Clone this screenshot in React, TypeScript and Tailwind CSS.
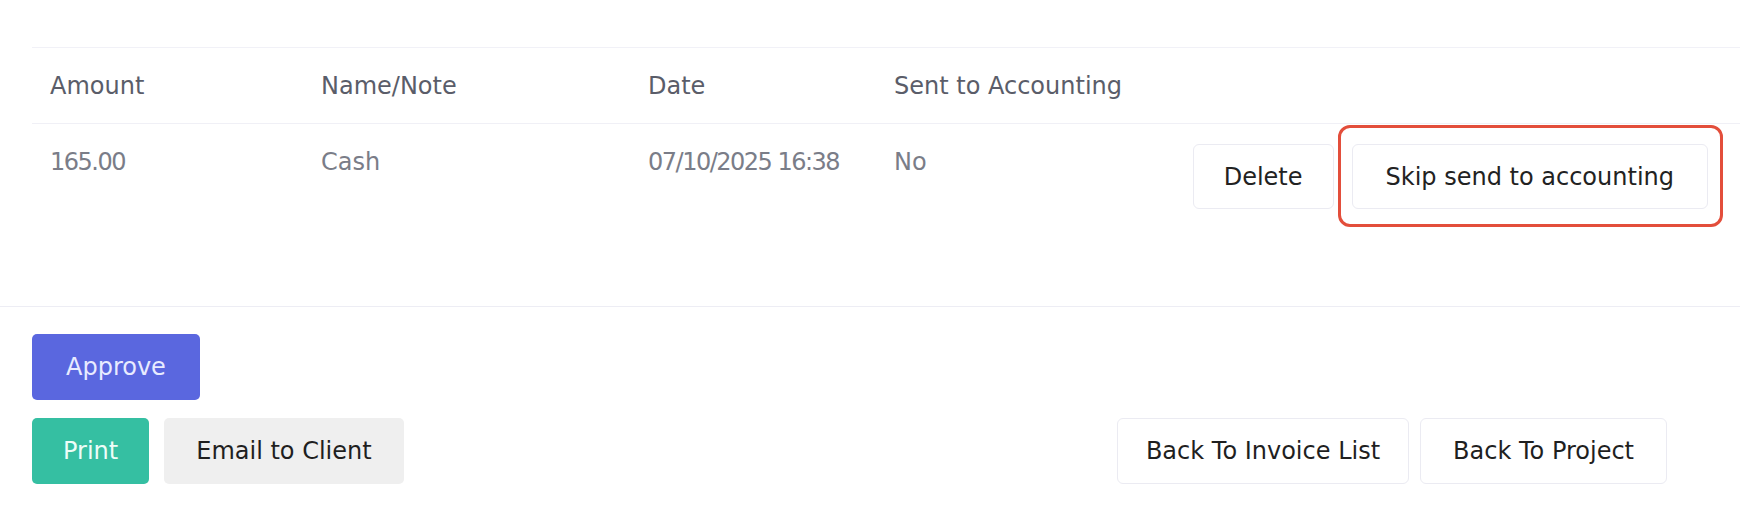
const rows = [
  { amount: "165.00", note: "Cash", date: "07/10/2025 16:38", sent: "No" },
];

const grid = "grid grid-cols-[271px_327px_246px_1fr_auto]";

export default function App() {
  return (
    <div className="h-[516px] w-full bg-white font-['DejaVu_Sans',sans-serif] text-[24px] leading-[36px]">
      <section className="border-b border-[#ededf4] pl-8 pt-[47px]">
        <div className="border-t border-[#f1f1f7]">
          <div className={`${grid} border-b border-[#f0f0f6] pb-[19px] pt-5 text-[#5a5d69]`}>
            <div className="pl-[18px]">Amount</div>
            <div className="pl-[18px]">Name/Note</div>
            <div className="pl-[18px]">Date</div>
            <div className="pl-[18px]">Sent to Accounting</div>
            <div />
          </div>

          {rows.map((row) => (
            <div
              key={row.date}
              className={`${grid} pb-[97px] pt-5 text-[#7a7d88]`}
            >
              <div className="pl-[18px] tracking-[-1.5px]">{row.amount}</div>
              <div className="pl-[18px]">{row.note}</div>
              <div className="pl-[18px] tracking-[-1.5px]">{row.date}</div>
              <div className="pl-[18px]">{row.sent}</div>
              <div className="flex gap-[18px] pr-8">
                <button className="h-[65px] rounded-md border border-[#ebebf2] bg-white px-[30px] text-[#222]">
                  Delete
                </button>
                <div className="relative">
                  <button className="h-[65px] rounded-md border border-[#ebebf2] bg-white px-[33px] text-[#222]">
                    Skip send to accounting
                  </button>
                  <span className="pointer-events-none absolute -bottom-[18px] -left-[14px] -right-[15px] -top-[19px] rounded-xl border-[3px] border-[#e34e3b]" />
                </div>
              </div>
            </div>
          ))}
        </div>
      </section>

      <section className="flex flex-col gap-[18px] pl-8 pr-[73px] pt-[27px]">
        <div>
          <button className="h-[66px] rounded-[5px] bg-[#5a67df] px-[34px] text-[#e8ebff]">
            Approve
          </button>
        </div>
        <div className="flex items-center justify-between">
          <div className="flex gap-[15px]">
            <button className="h-[66px] rounded-[5px] bg-[#35bfa2] px-[31px] text-[#eefdf8]">
              Print
            </button>
            <button className="h-[66px] rounded-[5px] bg-[#efefef] px-8 text-[#1f1f1f]">
              Email to Client
            </button>
          </div>
          <div className="flex gap-[11px]">
            <button className="h-[66px] rounded-md border border-[#ebebf2] bg-white px-7 text-[#1f1f1f]">
              Back To Invoice List
            </button>
            <button className="h-[66px] rounded-md border border-[#ebebf2] bg-white px-8 text-[#1f1f1f]">
              Back To Project
            </button>
          </div>
        </div>
      </section>
    </div>
  );
}
